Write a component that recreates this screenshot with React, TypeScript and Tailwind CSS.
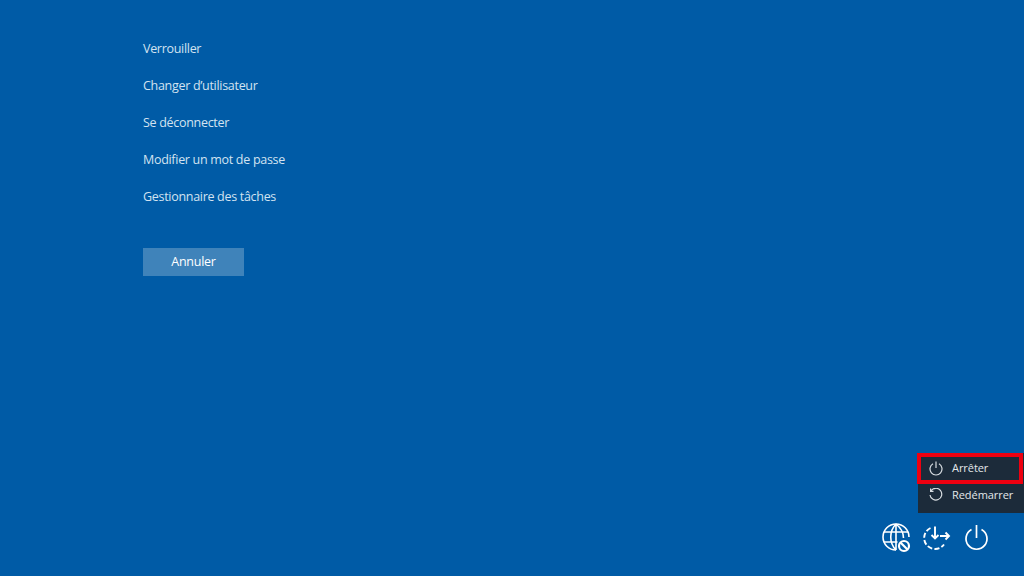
export default function App() {
  const items = ["Verrouiller", "Changer d’utilisateur", "Se déconnecter", "Modifier un mot de passe", "Gestionnaire des tâches"];
  return (
    <div className="relative flex h-[576px] w-[1024px] flex-col justify-between overflow-hidden bg-[#005ba6] text-white" style={{ fontFamily: '"Open Sans", sans-serif' }}>
      <div className="flex flex-col items-start pl-[143px] pt-[31px]">
        {items.map((t) => (
          <div key={t} className="flex h-[37px] items-center text-[12.5px] tracking-[-0.3px] text-[#d3e3f1]">{t}</div>
        ))}
        <div className="mt-[32px] flex h-[28px] w-[101px] items-center justify-center bg-[#3f83ba] pt-px text-[12.5px] tracking-[-0.26px] text-white">Annuler</div>
      </div>

      <div className="flex items-center justify-end gap-[10px] pb-[22px] pr-[34px]">
        <svg width="32" height="32" viewBox="0 0 32 32" fill="none" stroke="#fff" strokeWidth="1.6">
          <path d="M16 28A13 13 0 1 1 29 15" />
          <path d="M16 2C9 9 9 21 16 28M16 2c5 4 7.5 9 7.5 14M4 10h24M3.8 20h13.7M16 2v26" />
          <circle cx="24" cy="24" r="5" fill="#005ba6" strokeWidth="2.2" />
          <path d="M20.5 20.5l7 7" strokeWidth="2.2" />
        </svg>
        <svg width="30" height="32" viewBox="0 0 30 32" fill="none" stroke="#fff" strokeWidth="1.9">
          <path d="M8.5 6A11 11 0 1 0 22 22.5" strokeDasharray="5 2.2" />
          <path d="M13 4.5v12M9.5 13l3.5 3.5 3.5-3.5" />
          <path d="M18 14h9M23.5 10.5l3.5 3.5-3.5 3.5" />
        </svg>
        <svg width="28" height="32" viewBox="0 0 28 32" fill="none" stroke="#fff" strokeWidth="1.7">
          <path d="M14.5 3v13" />
          <path d="M9.5 7.5a10.5 10.5 0 1 0 10 0" />
        </svg>
      </div>

      <div className="absolute left-[918px] top-[453px] h-[60px] w-[106px] bg-[#1c2b3a] text-[11px] tracking-[-0.06px] text-[#e3e7ea]">
        <div className="flex h-[30px] items-center gap-[9px] pl-[11px]">
          <svg width="14" height="16" viewBox="0 0 14 16" fill="none" stroke="#d8dde1" strokeWidth="1.2">
            <path d="M7 1.5v6.5" />
            <path d="M4 3.8a6 6 0 1 0 6 0" />
          </svg>
          <span>Arrêter</span>
        </div>
        <div className="flex h-[24px] items-center gap-[8px] pl-[10px]">
          <svg width="16" height="14" viewBox="0 0 16 14" fill="none" stroke="#d8dde1" strokeWidth="1.2">
            <path d="M3 2.8A5.9 5.9 0 1 1 2 7" />
            <path d="M2.6.5v2.8h2.9" />
          </svg>
          <span>Redémarrer</span>
        </div>
        <div className="absolute left-[-1px] top-0 h-[31px] w-[106px] border-[4px] border-[#ee0010]" />
      </div>
    </div>
  );
}
